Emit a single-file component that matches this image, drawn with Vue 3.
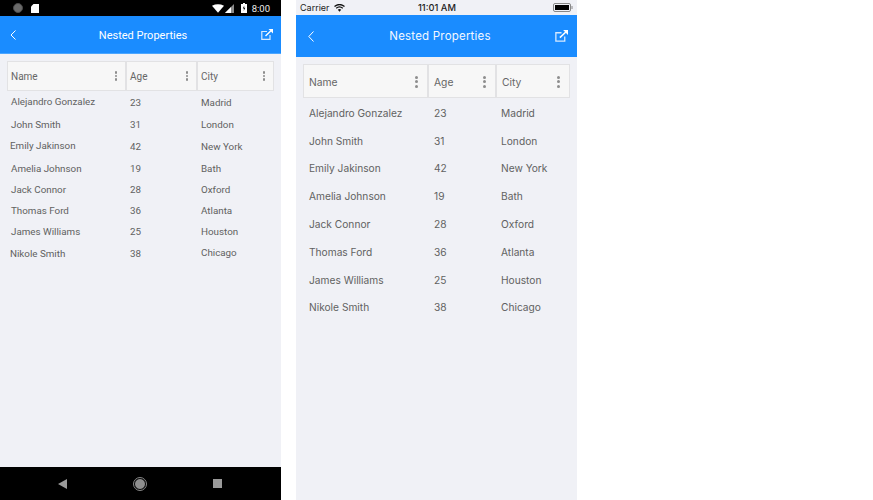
<template>
    <div class="page">
        <section class="phone android">
            <div class="status">
                <span class="dot"></span>
                <svg class="sd" width="8" height="9" viewBox="0 0 8 9"><path d="M2.500 0H8v9H0V2.500z" fill="#fff" /></svg>
                <span class="grow"></span>
                <svg width="12" height="9" viewBox="0 0 13 9"><path d="M0 1.500Q6.500-1.500 13 1.500L6.500 9z" fill="#fff" /></svg>
                <svg class="signal" width="9" height="9" viewBox="0 0 9 9"><path d="M9 0V9H0z" fill="#8a8a8a" /><path d="M6 3V9H0z" fill="#fff" /></svg>
                <svg class="battery" width="6" height="10" viewBox="0 0 6 10"><path d="M2 0H4V1H6V10H0V1H2z" fill="#fff" /><path d="M3.300 2.500 1.800 5.500H3L2.700 8 4.300 4.800H3.100z" fill="#000" /></svg>
                <span class="clock">8:00</span>
            </div>
            <header class="bar">
                <svg class="back" width="6" height="10" viewBox="0 0 6 10"><path d="M5.500.5 1 5l4.500 4.500" fill="none" stroke="#fff" /></svg>
                <h1>Nested Properties</h1>
                <svg class="open" width="12" height="11" viewBox="0 0 12 11"><path d="M6 2.500H.8V10.300H9V6" fill="none" stroke="#d6e9ff" stroke-width="1.200" /><path d="M4.500 7 10 1.800" stroke="#fff" stroke-width="1.400" /><path d="M7.500 0H12V4.500z" fill="#fff" /></svg>
            </header>
            <div class="grid">
                <div class="head">
                    <div v-for="col in columns" :key="col.key" class="cell">
                        <span>{{ col.label }}</span>
                        <span class="dots"><i></i><i></i><i></i></span>
                    </div>
                </div>
                <div v-for="row in people" :key="row.name" class="row" :style="{ height: row.h + 'px' }">
                    <span class="name" :style="{ paddingLeft: row.nx + 'px', marginTop: row.ny + 'px' }">{{ row.name }}</span>
                    <span class="age">{{ row.age }}</span>
                    <span class="city" :style="{ marginTop: row.cy + 'px' }">{{ row.city }}</span>
                </div>
            </div>
            <span class="grow"></span>
            <nav class="softkeys">
                <svg width="9" height="10" viewBox="0 0 9 10"><path d="M9 0V10L0 5z" fill="#9a9a9a" /></svg>
                <span class="home"></span>
                <span class="square"></span>
            </nav>
        </section>

        <section class="phone ios">
            <div class="status">
                <span>Carrier</span>
                <svg class="wifi" width="11" height="8" viewBox="0 0 11 8"><path d="M.5 2.500Q5.500-1.500 10.500 2.500M2.200 4.200Q5.500 1.500 8.800 4.200" fill="none" stroke="#111" stroke-width="1.300" /><path d="M3.800 5.700Q5.500 4.500 7.200 5.700L5.500 7.800z" fill="#111" /></svg>
                <span class="time">11:01 AM</span>
                <svg class="cell-battery" width="20" height="9" viewBox="0 0 20 9"><rect x=".5" y=".5" width="17" height="8" rx="1.500" fill="none" stroke="#888" /><rect x="2" y="2" width="14" height="5" fill="#000" /><rect x="18.500" y="3" width="1" height="3" fill="#888" /></svg>
            </div>
            <header class="bar">
                <svg class="back" width="6" height="11" viewBox="0 0 6 11"><path d="M5.500.5 .8 5.500l4.700 5" fill="none" stroke="#fff" /></svg>
                <h1>Nested Properties</h1>
                <svg class="open" width="13" height="12" viewBox="0 0 12 11"><path d="M6 2.500H.8V10.300H9V6" fill="none" stroke="#d6e9ff" stroke-width="1.200" /><path d="M4.500 7 10 1.800" stroke="#fff" stroke-width="1.400" /><path d="M7.500 0H12V4.500z" fill="#fff" /></svg>
            </header>
            <div class="grid">
                <div class="head">
                    <div v-for="col in columns" :key="col.key" class="cell">
                        <span>{{ col.label }}</span>
                        <span class="dots"><i></i><i></i><i></i></span>
                    </div>
                </div>
                <div v-for="row in people" :key="row.name" class="row">
                    <span class="name">{{ row.name }}</span>
                    <span class="age">{{ row.age }}</span>
                    <span class="city">{{ row.city }}</span>
                </div>
            </div>
        </section>
    </div>
</template>

<script setup>
const columns = [
    { key: 'name', label: 'Name' },
    { key: 'age', label: 'Age' },
    { key: 'city', label: 'City' },
];

// h / nx / ny / cy: the android grid doesn't line its rows up evenly
const people = [
    { name: 'Alejandro Gonzalez', age: 23, city: 'Madrid', h: 22, nx: 1, ny: -2, cy: 0 },
    { name: 'John Smith', age: 31, city: 'London', h: 22, nx: 1, ny: 0, cy: 0 },
    { name: 'Emily Jakinson', age: 42, city: 'New York', h: 22, nx: 0, ny: -1, cy: 0 },
    { name: 'Amelia Johnson', age: 19, city: 'Bath', h: 22, nx: 1, ny: 0, cy: 0 },
    { name: 'Jack Connor', age: 28, city: 'Oxford', h: 21, nx: 1, ny: 0, cy: 0 },
    { name: 'Thomas Ford', age: 36, city: 'Atlanta', h: 21, nx: 1, ny: 0, cy: 0 },
    { name: 'James Williams', age: 25, city: 'Houston', h: 21, nx: 1, ny: 0, cy: 0 },
    { name: 'Nikole Smith', age: 38, city: 'Chicago', h: 22, nx: 0, ny: 0, cy: -1 },
];
</script>

<style>
body {
    background: #fff;
}
</style>

<style scoped>
.page {
    display: flex;
    gap: 15px;
    height: 500px;
    width: 873px;
    overflow: hidden;
}

.phone {
    width: 281px;
    height: 500px;
    display: flex;
    flex-direction: column;
    background: #f0f1f6;
    color: #616161;
}

.grow {
    flex: 1;
}

.status {
    display: flex;
    align-items: center;
    flex-shrink: 0;
}

.bar {
    display: flex;
    align-items: center;
    justify-content: space-between;
    background: #1a8cff;
    flex-shrink: 0;
}

.bar h1 {
    margin: 0;
    color: #fff;
    font-weight: 400;
}

.grid {
    display: flex;
    flex-direction: column;
}

.head {
    display: grid;
    background: #f7f7f7;
    border: 1px solid #e2e2e4;
}

.cell {
    display: flex;
    align-items: center;
    justify-content: space-between;
    border-left: 2px solid #e2e2e4;
    color: #666;
}

.cell:first-child {
    border-left: 0;
}

.dots {
    display: flex;
    flex-direction: column;
    gap: 1.500px;
}

.dots i {
    width: 3px;
    height: 3px;
    border-radius: 50%;
    background: #8d8d8d;
}

.row {
    display: grid;
    align-items: center;
}

/* android */
.android {
    font-family: Roboto, sans-serif;
}

.android .status {
    height: 16px;
    background: #000;
    color: #eee;
    padding: 0 11px 0 13px;
}

.dot {
    width: 10px;
    height: 10px;
    border-radius: 50%;
    background: #6a6a6a;
    border: 1px solid #4a4a4a;
    box-sizing: border-box;
}

.sd {
    margin-left: 8px;
}

.signal {
    margin-left: 1px;
}

.battery {
    margin-left: 7px;
}

.clock {
    margin-left: 5px;
    font-size: 9.500px;
}

.android .bar {
    height: 38px;
    padding: 0 8px 0 10px;
    border-bottom: 1px solid #4aa5ff;
    box-sizing: border-box;
}

.android .bar h1 {
    font-size: 11px;
    margin: 2px 0 0 9px;
}

.android .grid {
    margin: 7px 7px 0;
}

.android .head {
    height: 30px;
    box-sizing: border-box;
    grid-template-columns: 117px 71px 1fr;
}

.android .cell {
    font-size: 10px;
    padding: 0 8px 0 3px;
}

.android .dots {
    gap: 1px;
}

.android .dots i {
    width: 2.500px;
    height: 2.500px;
}

.android .row {
    grid-template-columns: 120px 71px 1fr;
    font-size: 9.800px;
    padding-left: 3px;
}

.softkeys {
    height: 33px;
    flex-shrink: 0;
    background: #000;
    display: flex;
    align-items: center;
    padding: 0 59px 0 58px;
    justify-content: space-between;
}

.home {
    width: 10px;
    height: 10px;
    border-radius: 50%;
    background: #8f8f8f;
    border: 1px solid #000;
    outline: 1px solid #888;
}

.square {
    width: 9px;
    height: 9px;
    background: #9a9a9a;
}

/* ios */
.ios {
    font-family: Inter, sans-serif;
}

.ios .status {
    height: 15px;
    padding: 0 4px;
    font-size: 9px;
    color: #222;
    position: relative;
}

.wifi {
    margin-left: 4px;
}

.time {
    position: absolute;
    left: 122px;
    font-size: 9.300px;
    font-weight: 500;
}

.cell-battery {
    margin-left: auto;
}

.ios .bar {
    height: 42px;
    padding: 0 9px 0 12px;
}

.ios .bar h1 {
    font-size: 11.500px;
    letter-spacing: .2px;
    margin-left: 11px;
    color: #f2f8ff;
}

.ios .grid {
    margin: 7px 7px 0;
}

.ios .head {
    height: 34px;
    box-sizing: border-box;
    grid-template-columns: 123px 68px 1fr;
}

.ios .cell {
    font-size: 10.300px;
    padding: 1px 9px 0 5px;
}

.ios .row {
    height: 27.800px;
    grid-template-columns: 125px 67px 1fr;
    font-size: 10.200px;
    padding-left: 6px;
}

.ios .row:nth-child(2) {
    margin-top: 1px;
}
</style>
